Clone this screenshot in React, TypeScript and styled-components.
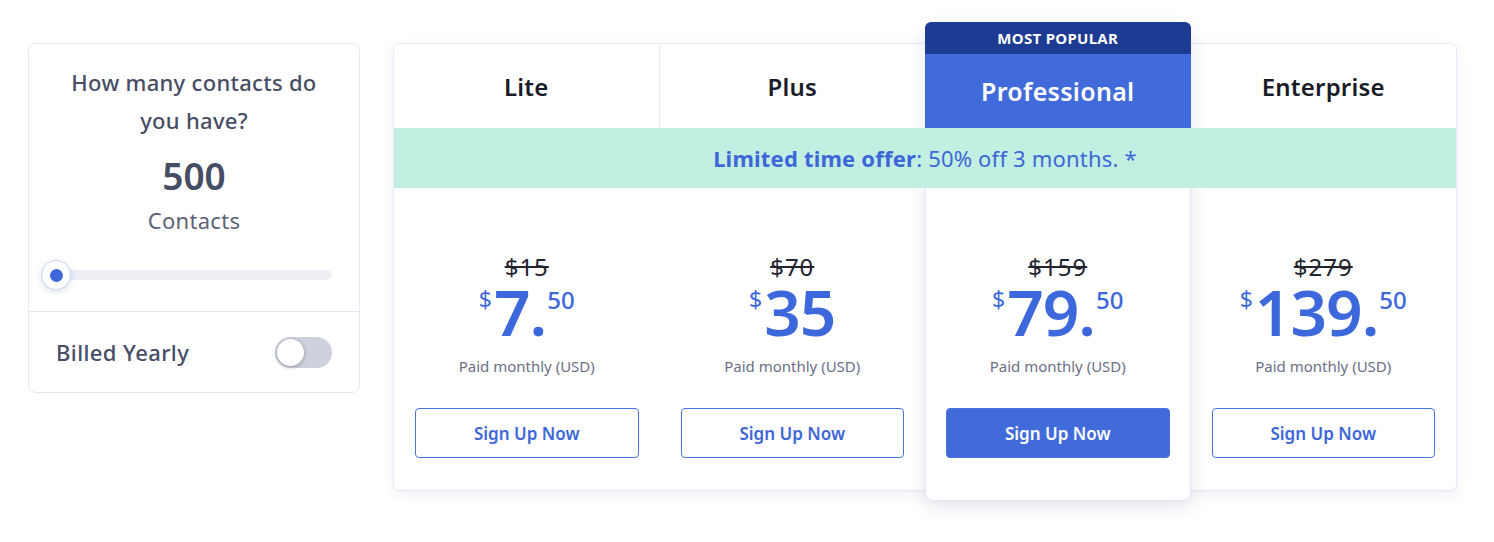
import React, { FC } from "react";
import styled, { createGlobalStyle } from "styled-components";

type Plan = {
  name: string;
  oldPrice: string;
  whole: string;
  cents?: string;
  popular?: boolean;
};

const plans: Plan[] = [
  { name: "Lite", oldPrice: "$15", whole: "7.", cents: "50" },
  { name: "Plus", oldPrice: "$70", whole: "35" },
  { name: "Professional", oldPrice: "$159", whole: "79.", cents: "50", popular: true },
  { name: "Enterprise", oldPrice: "$279", whole: "139.", cents: "50" },
];

const App: FC = () => {
  return (
    <>
      <GlobalStyle />
      <Page>
        <ContactsCard>
          <ContactsTop>
            <Question>How many contacts do you have?</Question>
            <Count>500</Count>
            <CountUnit>Contacts</CountUnit>
            <Slider>
              <SliderThumb>
                <ThumbDot />
              </SliderThumb>
              <SliderTrack />
            </Slider>
          </ContactsTop>
          <BillingRow>
            <BillingLabel>Billed Yearly</BillingLabel>
            <Toggle>
              <ToggleKnob />
            </Toggle>
          </BillingRow>
        </ContactsCard>

        <PriceTable>
          <PopularBackdrop $col={3} />
          {plans.map((plan, i) =>
            plan.popular ? (
              <PopularHeader key={plan.name} $col={i + 1}>
                <PopularBand>MOST POPULAR</PopularBand>
                <PopularName>{plan.name}</PopularName>
              </PopularHeader>
            ) : (
              <HeaderCell key={plan.name} $col={i + 1} $divider={i === 0}>
                {plan.name}
              </HeaderCell>
            )
          )}
          <OfferBanner>
            <strong>Limited time offer</strong>: 50% off 3 months. *
          </OfferBanner>
          {plans.map((plan, i) => (
            <PlanBody key={plan.name} $col={i + 1}>
              <OldPrice>{plan.oldPrice}</OldPrice>
              <Price>
                <Currency>$</Currency>
                <Whole>{plan.whole}</Whole>
                {plan.cents && <Cents>{plan.cents}</Cents>}
              </Price>
              <PaidNote>Paid monthly (USD)</PaidNote>
              <SignUpButton $primary={plan.popular}>Sign Up Now</SignUpButton>
            </PlanBody>
          ))}
        </PriceTable>
      </Page>
    </>
  );
};

const GlobalStyle = createGlobalStyle`
  html, body {
    margin: 0;
    padding: 0;
    background: #ffffff;
  }
  body {
    font-family: "Noto Sans", "Liberation Sans", Arial, sans-serif;
    -webkit-font-smoothing: antialiased;
  }
`;

const Page = styled.div`
  display: flex;
  align-items: flex-start;
  gap: 33px;
  padding: 43px 0 0 28px;
  width: 1494px;
  height: 542px;
  box-sizing: border-box;
`;

const ContactsCard = styled.div`
  width: 332px;
  height: 350px;
  box-sizing: border-box;
  border: 1px solid #e4e9f8;
  border-radius: 8px;
  display: flex;
  flex-direction: column;
`;

const ContactsTop = styled.div`
  padding: 19px 0 21px;
  border-bottom: 1px solid #e4e9f8;
  display: flex;
  flex-direction: column;
  align-items: center;
  color: #464d64;
`;

const Question = styled.div`
  width: 290px;
  font-size: 22px;
  line-height: 38px;
  letter-spacing: 0.3px;
  text-align: center;
  font-weight: 500;
`;

const Count = styled.div`
  margin-top: 16px;
  font-size: 37px;
  line-height: 42px;
  font-weight: 600;
`;

const CountUnit = styled.div`
  margin-top: 9px;
  font-size: 22px;
  line-height: 28px;
  letter-spacing: 0.3px;
  color: #5b6278;
`;

const Slider = styled.div`
  margin-top: 26px;
  align-self: stretch;
  display: flex;
  align-items: center;
  padding: 0 27px 0 12px;
`;

const SliderThumb = styled.div`
  width: 30px;
  height: 30px;
  box-sizing: border-box;
  border-radius: 50%;
  background: #ffffff;
  border: 1px solid #c9d6f7;
  box-shadow: 0 2px 6px rgba(60, 80, 140, 0.18);
  display: flex;
  align-items: center;
  justify-content: center;
  position: relative;
  z-index: 1;
`;

const ThumbDot = styled.div`
  width: 13px;
  height: 13px;
  border-radius: 50%;
  background: #3d68dc;
`;

const SliderTrack = styled.div`
  flex: 1;
  height: 10px;
  margin-left: -15px;
  border-radius: 5px;
  background: #edeff5;
`;

const BillingRow = styled.div`
  flex: 1;
  display: flex;
  align-items: center;
  justify-content: space-between;
  padding: 0 27px;
`;

const BillingLabel = styled.span`
  font-size: 22px;
  font-weight: 500;
  letter-spacing: 0.4px;
  color: #464d64;
`;

const Toggle = styled.div`
  width: 57px;
  height: 31px;
  border-radius: 16px;
  background: #cdd1dc;
  display: flex;
  align-items: center;
  padding: 0 2px;
  box-sizing: border-box;
`;

const ToggleKnob = styled.div`
  width: 27px;
  height: 27px;
  border-radius: 50%;
  background: #ffffff;
  box-shadow: 0 1px 4px rgba(0, 0, 0, 0.3);
`;

const PriceTable = styled.div`
  width: 1064px;
  box-sizing: border-box;
  display: grid;
  grid-template-columns: repeat(4, 1fr);
  grid-template-rows: 84px 60px 302px;
  border: 1px solid #e6eaf6;
  border-radius: 6px;
  box-shadow: 0 4px 14px rgba(40, 60, 110, 0.07);
  background: #ffffff;
`;

const PopularBackdrop = styled.div<{ $col: number }>`
  grid-column: ${(p) => p.$col};
  grid-row: 1 / 4;
  margin: -22px 0 -11px;
  border: 1px solid #e4e9f8;
  border-radius: 8px;
  background: #ffffff;
  box-shadow: 0 6px 18px rgba(40, 60, 110, 0.12);
  z-index: 1;
`;

const HeaderCell = styled.div<{ $col: number; $divider?: boolean }>`
  grid-column: ${(p) => p.$col};
  grid-row: 1;
  display: flex;
  align-items: center;
  justify-content: center;
  font-size: 24px;
  font-weight: 600;
  letter-spacing: 0.2px;
  color: #191c28;
  border-right: ${(p) => (p.$divider ? "1px solid #e6eaf6" : "none")};
`;

const PopularHeader = styled.div<{ $col: number }>`
  grid-column: ${(p) => p.$col};
  grid-row: 1;
  margin-top: -22px;
  display: flex;
  flex-direction: column;
  border-radius: 6px 6px 0 0;
  overflow: hidden;
  z-index: 2;
`;

const PopularBand = styled.div`
  height: 32px;
  display: flex;
  align-items: center;
  justify-content: center;
  background: #1e3b94;
  color: #ffffff;
  font-size: 15px;
  font-weight: 700;
  letter-spacing: 0.3px;
`;

const PopularName = styled.div`
  flex: 1;
  display: flex;
  align-items: center;
  justify-content: center;
  background: #416bdb;
  color: #ffffff;
  font-size: 25px;
  font-weight: 600;
  letter-spacing: 0.3px;
`;

const OfferBanner = styled.div`
  grid-column: 1 / -1;
  grid-row: 2;
  display: flex;
  align-items: center;
  justify-content: center;
  background: #c1efe2;
  color: #3d67d8;
  font-size: 22px;
  letter-spacing: 0.2px;
  white-space: pre;
  z-index: 3;

  strong {
    font-weight: 700;
  }
`;

const PlanBody = styled.div<{ $col: number }>`
  grid-column: ${(p) => p.$col};
  grid-row: 3;
  display: flex;
  flex-direction: column;
  align-items: center;
  padding: 64px 21px 0;
  z-index: 2;
`;

const OldPrice = styled.div`
  font-size: 24px;
  line-height: 30px;
  letter-spacing: 1px;
  color: #23252e;
  text-decoration: line-through;
  text-decoration-thickness: 1.5px;
`;

const Price = styled.div`
  display: flex;
  align-items: flex-start;
  color: #3d68dc;
  height: 60px;
`;

const Currency = styled.span`
  font-size: 23px;
  line-height: 23px;
  margin-top: 6px;
  margin-right: 2px;
`;

const Whole = styled.span`
  font-size: 64px;
  line-height: 60px;
  font-weight: 600;
  letter-spacing: -1px;
`;

const Cents = styled.span`
  font-size: 24px;
  line-height: 24px;
  font-weight: 500;
  margin-top: 6px;
  margin-left: 1px;
`;

const PaidNote = styled.div`
  margin-top: 14px;
  font-size: 15px;
  line-height: 20px;
  color: #6b7086;
`;

const SignUpButton = styled.button<{ $primary?: boolean }>`
  margin-top: 32px;
  width: 100%;
  height: 50px;
  box-sizing: border-box;
  border-radius: 4px;
  border: 1.5px solid #4a73e0;
  background: ${(p) => (p.$primary ? "#416bdb" : "#ffffff")};
  color: ${(p) => (p.$primary ? "#ffffff" : "#3d67d8")};
  font-family: inherit;
  font-size: 17px;
  font-weight: 600;
  cursor: pointer;
`;

export default App;
